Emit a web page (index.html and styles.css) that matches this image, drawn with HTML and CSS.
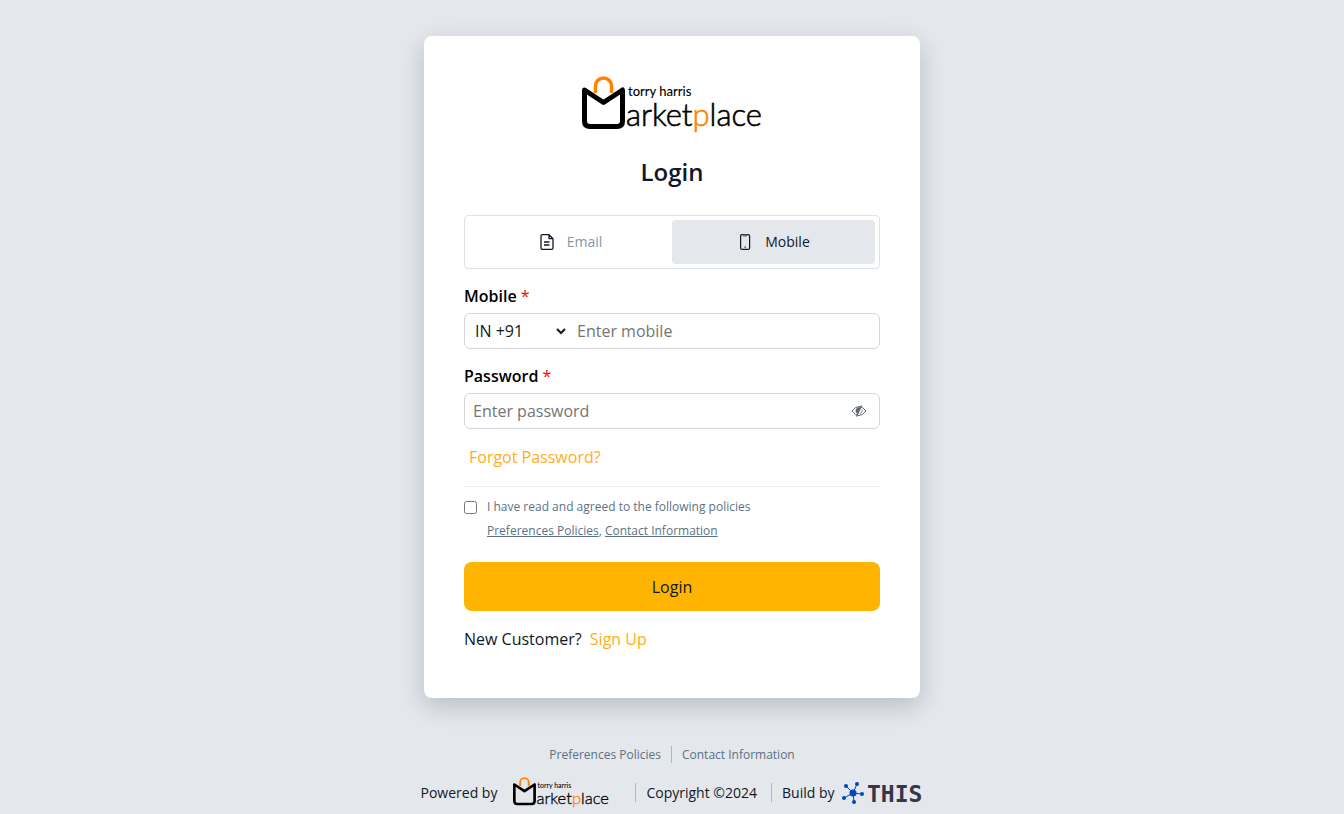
FILE: index.html
```html
<!DOCTYPE html>
<html lang="en">

<head>
    <meta charset="UTF-8">
    <meta name="viewport" content="width=device-width, initial-scale=1.0">
    <title>Login - Marketplace</title>
    <link rel="stylesheet" href="styles.css">
</head>

<body>

    <main class="card">
        <svg class="logo" viewBox="0 0 180 58" role="img" aria-label="torry harris Marketplace">
            <path d="M13.500 17V10a8 8 0 0 1 16 0v7" fill="none" stroke="#ff8200" stroke-width="3.500" />
            <path d="M2.500 14 21.500 26.500 40.500 14V45q0 5.500-5.500 5.500H8q-5.500 0-5.500-5.500z" fill="none" stroke="#000" stroke-width="5" stroke-linejoin="round" />
            <text class="logo-small" x="46" y="20">torry harris</text>
            <text class="logo-big" x="44" y="50">arket<tspan class="logo-p">p</tspan>lace</text>
        </svg>
        <h1>Login</h1>

        <div class="tabs">
            <button type="button" class="tab">
                <svg class="tab-icon" viewBox="0 0 16 16" fill="none" stroke="#101828" stroke-width="1.300" stroke-linejoin="round" aria-hidden="true">
                    <path d="M3.500 .7H10L14 4.700V14a1.300 1.300 0 0 1-1.300 1.300H3.300A1.300 1.300 0 0 1 2 14V2A1.300 1.300 0 0 1 3.500 .7zM10 1v3.700h4M5 8h5.500M5 11h5.500" />
                </svg>
                Email
            </button>
            <button type="button" class="tab active">
                <svg class="tab-icon" viewBox="0 0 16 16" fill="none" stroke="#101828" stroke-width="1.200" aria-hidden="true">
                    <rect x="3.600" y=".6" width="9" height="14.800" rx="1.500" />
                    <path d="M6 1.500h4.200" stroke="#68737d" stroke-width="2" />
                    <path d="M7.500 13.200h1.200" />
                </svg>
                Mobile
            </button>
        </div>

        <form>
            <label class="label" for="mobile">Mobile <span class="required">*</span></label>
            <div class="field">
                <select class="country" aria-label="Country code">
                    <option>IN +91</option>
                </select>
                <input type="tel" id="mobile" placeholder="Enter mobile">
            </div>

            <label class="label" for="password">Password <span class="required">*</span></label>
            <div class="field">
                <input type="password" id="password" placeholder="Enter password">
                <button type="button" class="eye" aria-label="Show password">
                    <svg viewBox="0 0 16 14" fill="none" stroke="#5c6570" aria-hidden="true">
                        <path d="M1 7q7-9 14 0-7 9-14 0z" />
                        <path d="M9 4 6.500 9.500A3.200 3.200 0 0 1 7 3.800z" fill="#5c6570" />
                        <path d="M10.800 5.500a3 3 0 0 1-2 4" stroke-width=".8" />
                        <path d="M10.500 1.500 5.500 12.500" stroke-width="1.300" />
                    </svg>
                </button>
            </div>

            <a class="forgot" href="#">Forgot Password?</a>

            <div class="policies">
                <input type="checkbox" id="agree">
                <div>
                    <label for="agree">I have read and agreed to the following policies</label>
                    <div class="policy-links"><a href="#">Preferences Policies</a>, <a href="#">Contact Information</a></div>
                </div>
            </div>

            <button type="submit" class="login">Login</button>
        </form>

        <p class="signup">New Customer? <a href="#">Sign Up</a></p>
    </main>

    <footer>
        <nav class="footer-links">
            <a href="#">Preferences Policies</a>
            <a href="#">Contact Information</a>
        </nav>
        <div class="footer-info">
            <div class="powered">
                Powered by
                <svg class="footer-logo" viewBox="0 0 180 58" role="img" aria-label="torry harris Marketplace">
                    <path d="M13.500 17V10a8 8 0 0 1 16 0v7" fill="none" stroke="#ff8200" stroke-width="3.500" />
                    <path d="M2.500 14 21.500 26.500 40.500 14V45q0 5.500-5.500 5.500H8q-5.500 0-5.500-5.500z" fill="none" stroke="#000" stroke-width="5" stroke-linejoin="round" />
                    <text class="logo-small" x="46" y="20">torry harris</text>
                    <text class="logo-big" x="44" y="50">arket<tspan class="logo-p">p</tspan>lace</text>
                </svg>
            </div>
            <div class="copyright">Copyright ©2024</div>
            <div class="build">
                Build by
                <svg class="this-logo" viewBox="0 0 81 24" role="img" aria-label="THIS">
                    <g stroke="#0047bb" stroke-width="1">
                        <path d="M11 12 4 5M11 12 15 3M11 12 20 13M11 12 12 21M11 12 2 17" />
                    </g>
                    <g fill="#0047bb">
                        <circle cx="11" cy="12" r="3.500" />
                        <circle cx="4" cy="5" r="2" />
                        <circle cx="15" cy="3" r="2" />
                        <circle cx="20" cy="13" r="2" />
                        <circle cx="12" cy="21" r="2" />
                        <circle cx="2" cy="17" r="2" />
                    </g>
                    <text class="this-text" x="25" y="21">THIS</text>
                </svg>
            </div>
        </div>
    </footer>

</body>

</html>
```
FILE: styles.css
```css
* {
    box-sizing: border-box;
}

body {
    font-family: "Open Sans", sans-serif;
    font-size: 16px;
    line-height: 24px;
    color: #101828;
    background-color: #e4e7ec;
    margin: 0;
    padding: 36px 0 0;
}

button,
input,
select {
    font: inherit;
    color: inherit;
}

button {
    cursor: pointer;
}

a {
    color: #ffae1a;
    text-decoration: none;
}

.logo-small {
    font: 500 13px Lato, sans-serif;
}

.logo-big {
    font: 300 31px Lato, sans-serif;
    stroke: #000;
    stroke-width: 0.6;
}

.logo-p {
    fill: #ff8200;
    stroke: #ff8200;
}

.card {
    max-width: 496px;
    margin: 0 auto;
    padding: 40px 40px 47px;
    background: white;
    border-radius: 8px;
    box-shadow: 0 8px 24px rgba(16, 24, 40, 0.2);
}

.logo {
    display: block;
    width: 180px;
    height: 58px;
    margin: 0 auto;
    overflow: visible;
}

h1 {
    margin: 20px 0 25px;
    font-size: 24px;
    font-weight: 600;
    line-height: 36px;
    text-align: center;
}

.tabs {
    display: flex;
    height: 54px;
    padding: 4px;
    border: 1px solid #dde2e9;
    border-radius: 4px;
}

.tab {
    flex: 1;
    display: flex;
    align-items: center;
    justify-content: center;
    gap: 12px;
    border: none;
    border-radius: 4px;
    background: none;
    font-size: 14px;
    color: #8497a5;
}

.tab.active {
    background: #e4e7ec;
    color: #101828;
}

.tab-icon {
    width: 16px;
    height: 16px;
}

.label {
    display: block;
    margin: 15px 0 5px;
    font-weight: 600;
    color: #000;
}

.required {
    font-weight: 400;
    color: #f00;
}

.field {
    display: flex;
    align-items: center;
    height: 36px;
    border: 1px solid #d5d7da;
    border-radius: 6px;
}

.field input {
    flex: 1;
    min-width: 0;
    height: 100%;
    padding: 0 8px;
    border: none;
    outline: none;
    background: none;
}

.field input::placeholder {
    color: #757575;
}

.country {
    width: 98px;
    margin-left: 6px;
    border: none;
    background: none;
}

.eye {
    display: flex;
    padding: 0 12px;
    border: none;
    background: none;
}

.eye svg {
    width: 16px;
    height: 14px;
}

.forgot {
    display: block;
    padding: 16px 5px 17px;
    border-bottom: 1px solid #eceef0;
}

.policies {
    display: flex;
    gap: 10px;
    padding: 8px 0 19px;
    font-size: 12px;
    color: #5b7282;
}

.policies input {
    width: 13px;
    height: 13px;
    margin: 6px 0 0;
}

.policies a {
    color: inherit;
    text-decoration: underline;
}

.login {
    width: 100%;
    height: 49px;
    border: none;
    border-radius: 8px;
    background: #ffb400;
}

.signup {
    margin: 16px 0 0;
}

.signup a {
    margin-left: 4px;
}

footer {
    padding-top: 48px;
}

.footer-links,
.footer-info {
    display: flex;
    justify-content: center;
    align-items: center;
}

.footer-links {
    font-size: 12px;
    line-height: 17px;
}

.footer-links a {
    padding: 0 10px;
    color: #5b7282;
}

.footer-links a + a,
.copyright,
.build {
    border-left: 1px solid #ffb400;
}

.footer-info {
    padding-top: 14px;
    font-size: 14px;
    line-height: 19px;
}

.powered,
.build {
    display: flex;
    align-items: center;
}

.powered {
    gap: 16px;
    padding-right: 26px;
}

.copyright {
    padding: 0 14px 0 10px;
}

.build {
    gap: 8px;
    height: 19px;
    padding-left: 10px;
}

.footer-logo {
    width: 96px;
    height: 31px;
    overflow: visible;
}

.this-logo {
    width: 81px;
    height: 24px;
    overflow: visible;
}

.this-text {
    font: 700 23px "DejaVu Sans Mono", monospace;
    fill: #363648;
}
```
